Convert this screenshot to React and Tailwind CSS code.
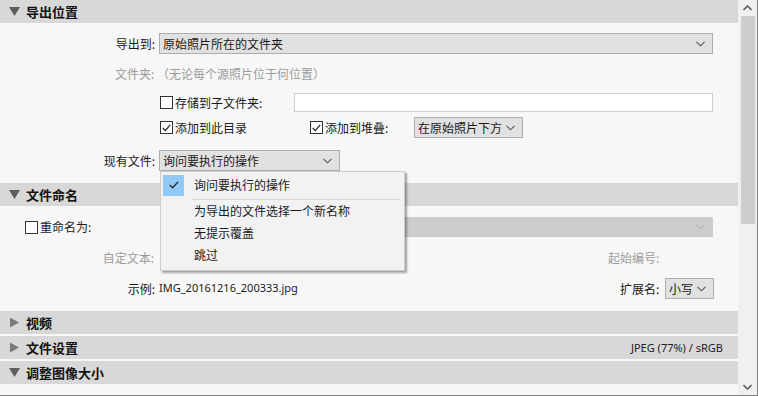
import React from 'react';

const cjk = { fontFamily: '"Noto Sans CJK SC", "Microsoft YaHei", sans-serif' };
const latin = { fontFamily: '"Noto Sans", "Open Sans", sans-serif' };

function Chevron({ color = '#555' }) {
  return (
    <svg width="9" height="6" viewBox="0 0 9 6" className="shrink-0">
      <path d="M0.5 0.8 L4.5 4.8 L8.5 0.8" fill="none" stroke={color} strokeWidth="1.1" />
    </svg>
  );
}

function Select({ value, className = '', disabled = false }) {
  return (
    <div
      className={`flex items-center justify-between pl-[3px] pr-[7px] border ${
        disabled ? 'bg-[#cccccc] border-[#cccccc]' : 'bg-[#e1e1e1] border-[#adadad]'
      } ${className}`}
    >
      <span className="text-[12px] leading-none text-[#1a1a1a]">{value}</span>
      <Chevron color={disabled ? '#b0b0b0' : '#555'} />
    </div>
  );
}

function Checkbox({ checked }) {
  return (
    <div className="w-[13px] h-[13px] bg-white border border-[#333] flex items-center justify-center shrink-0">
      {checked && (
        <svg width="9" height="8" viewBox="0 0 9 8">
          <path d="M0.8 4 L3.3 6.6 L8.2 0.8" fill="none" stroke="#222" strokeWidth="1.2" />
        </svg>
      )}
    </div>
  );
}

function Header({ title, open, right }) {
  return (
    <div className="h-[23px] bg-[#d8d8d8] flex items-center pl-[9px] pr-[15px]">
      {open ? (
        <svg width="11" height="9" viewBox="0 0 11 9" className="mr-[6px]">
          <path d="M0 0 H11 L5.5 9 Z" fill="#5e5e5e" />
        </svg>
      ) : (
        <svg width="11" height="11" viewBox="0 0 11 11" className="mr-[6px]">
          <path d="M1 0.5 L10 5.5 L1 10.5 Z" fill="#7a7a7a" />
        </svg>
      )}
      <span className="text-[13px] font-bold text-[#111] leading-none flex-1">{title}</span>
      {right && (
        <span className="text-[11px] text-[#222] leading-none" style={latin}>
          {right}
        </span>
      )}
    </div>
  );
}

export default function App() {
  const items = ['为导出的文件选择一个新名称', '无提示覆盖', '跳过'];

  return (
    <div className="w-[758px] h-[396px] bg-[#f7f7f7] flex relative overflow-hidden select-none" style={cjk}>
      <div className="w-[738px] flex flex-col">
        <Header title="导出位置" open />

        <div className="flex flex-col pt-[10px] pb-[12px]">
          <div className="flex items-center h-[21px]">
            <span className="w-[155px] text-right text-[12px] text-[#1a1a1a]">导出到:</span>
            <Select value="原始照片所在的文件夹" className="ml-[4px] w-[554px] h-[21px]" />
          </div>
          <div className="flex items-center h-[39px] pl-[115px]">
            <span className="text-[12px] text-[#9c9c9c]">文件夹: （无论每个源照片位于何位置）</span>
          </div>
          <div className="flex items-center h-[19px] pl-[160px]">
            <Checkbox />
            <span className="ml-[2px] text-[12px] text-[#1a1a1a] w-[119px]">存储到子文件夹:</span>
            <div className="w-[419px] h-[19px] bg-white border border-[#d0d0d0]" />
          </div>
          <div className="flex items-center h-[21px] mt-[5px] pl-[160px]">
            <Checkbox checked />
            <span className="ml-[2px] text-[12px] text-[#1a1a1a] w-[135px]">添加到此目录</span>
            <Checkbox checked />
            <span className="ml-[2px] text-[12px] text-[#1a1a1a] w-[89px]">添加到堆叠:</span>
            <Select value="在原始照片下方" className="w-[109px] h-[21px]" />
          </div>
          <div className="flex items-center h-[21px] mt-[12px]">
            <span className="w-[155px] text-right text-[12px] text-[#1a1a1a]">现有文件:</span>
            <Select value="询问要执行的操作" className="ml-[4px] w-[181px] h-[21px]" />
          </div>
        </div>

        <Header title="文件命名" open />

        <div className="flex flex-col pt-[11px] pb-[12px]">
          <div className="flex items-center h-[20px] pl-[25px]">
            <Checkbox />
            <span className="ml-[2px] text-[12px] text-[#1a1a1a] w-[120px]">重命名为:</span>
            <Select value="" disabled className="w-[553px] h-[20px]" />
          </div>
          <div className="flex items-center h-[20px] mt-[11px]">
            <span className="w-[154px] text-right text-[12px] text-[#9c9c9c]">自定文本:</span>
            <span className="ml-[454px] text-[12px] text-[#9c9c9c]">起始编号:</span>
          </div>
          <div className="flex items-center h-[21px] mt-[10px]">
            <span className="w-[155px] text-right text-[12px] text-[#1a1a1a]">示例:</span>
            <span className="ml-[4px] text-[11px] text-[#1a1a1a] w-[461px]" style={latin}>
              IMG_20161216_200333.jpg
            </span>
            <span className="text-[12px] text-[#1a1a1a] w-[45px]">扩展名:</span>
            <Select value="小写" className="w-[49px] h-[21px]" />
          </div>
        </div>

        <Header title="视频" />
        <div className="h-[2px]" />
        <Header title="文件设置" right="JPEG (77%) / sRGB" />
        <div className="h-[2px]" />
        <Header title="调整图像大小" open />
        <div className="flex-1" />
      </div>

      {/* scrollbar */}
      <div className="w-[19px] h-[395px] bg-[#f0f0f0] flex flex-col items-center">
        <div className="h-[16px] flex items-center justify-center">
          <svg width="9" height="6" viewBox="0 0 9 6">
            <path d="M0.5 5 L4.5 1 L8.5 5" fill="none" stroke="#606060" strokeWidth="1.6" />
          </svg>
        </div>
        <div className="w-[14px] h-[208px] bg-[#cdcdcd]" />
        <div className="flex-1" />
        <div className="h-[16px] flex items-center justify-center">
          <svg width="9" height="6" viewBox="0 0 9 6">
            <path d="M0.5 1 L4.5 5 L8.5 1" fill="none" stroke="#606060" strokeWidth="1.6" />
          </svg>
        </div>
      </div>
      <div className="w-[1px] h-[396px] bg-[#808080]" />
      <div className="absolute left-0 bottom-0 w-[758px] h-[1px] bg-[#808080]" />

      {/* dropdown menu */}
      <div className="absolute left-[160px] top-[171px] w-[245px] h-[100px] bg-[#f2f2f2] border border-[#cccccc] shadow-[2px_2px_2px_rgba(0,0,0,0.35)] flex flex-col p-[2px]">
        <div className="flex items-center h-[22px]">
          <div className="w-[21px] h-[21px] bg-[#91c9f7] flex items-center justify-center">
            <svg width="10" height="8" viewBox="0 0 10 8">
              <path d="M0.8 4 L3.6 6.8 L9.2 0.8" fill="none" stroke="#2d2d2d" strokeWidth="1.3" />
            </svg>
          </div>
          <span className="ml-[10px] text-[12px] text-[#1a1a1a]">询问要执行的操作</span>
        </div>
        <div className="ml-[28px] mr-[2px] mt-[3px] h-[1px] bg-[#d7d7d7]" />
        {items.map((t, i) => (
          <div key={i} className="flex items-center h-[23px] pl-[31px] -mt-[1px] first:mt-[2px]">
            <span className="text-[12px] text-[#1a1a1a]">{t}</span>
          </div>
        ))}
      </div>
    </div>
  );
}
